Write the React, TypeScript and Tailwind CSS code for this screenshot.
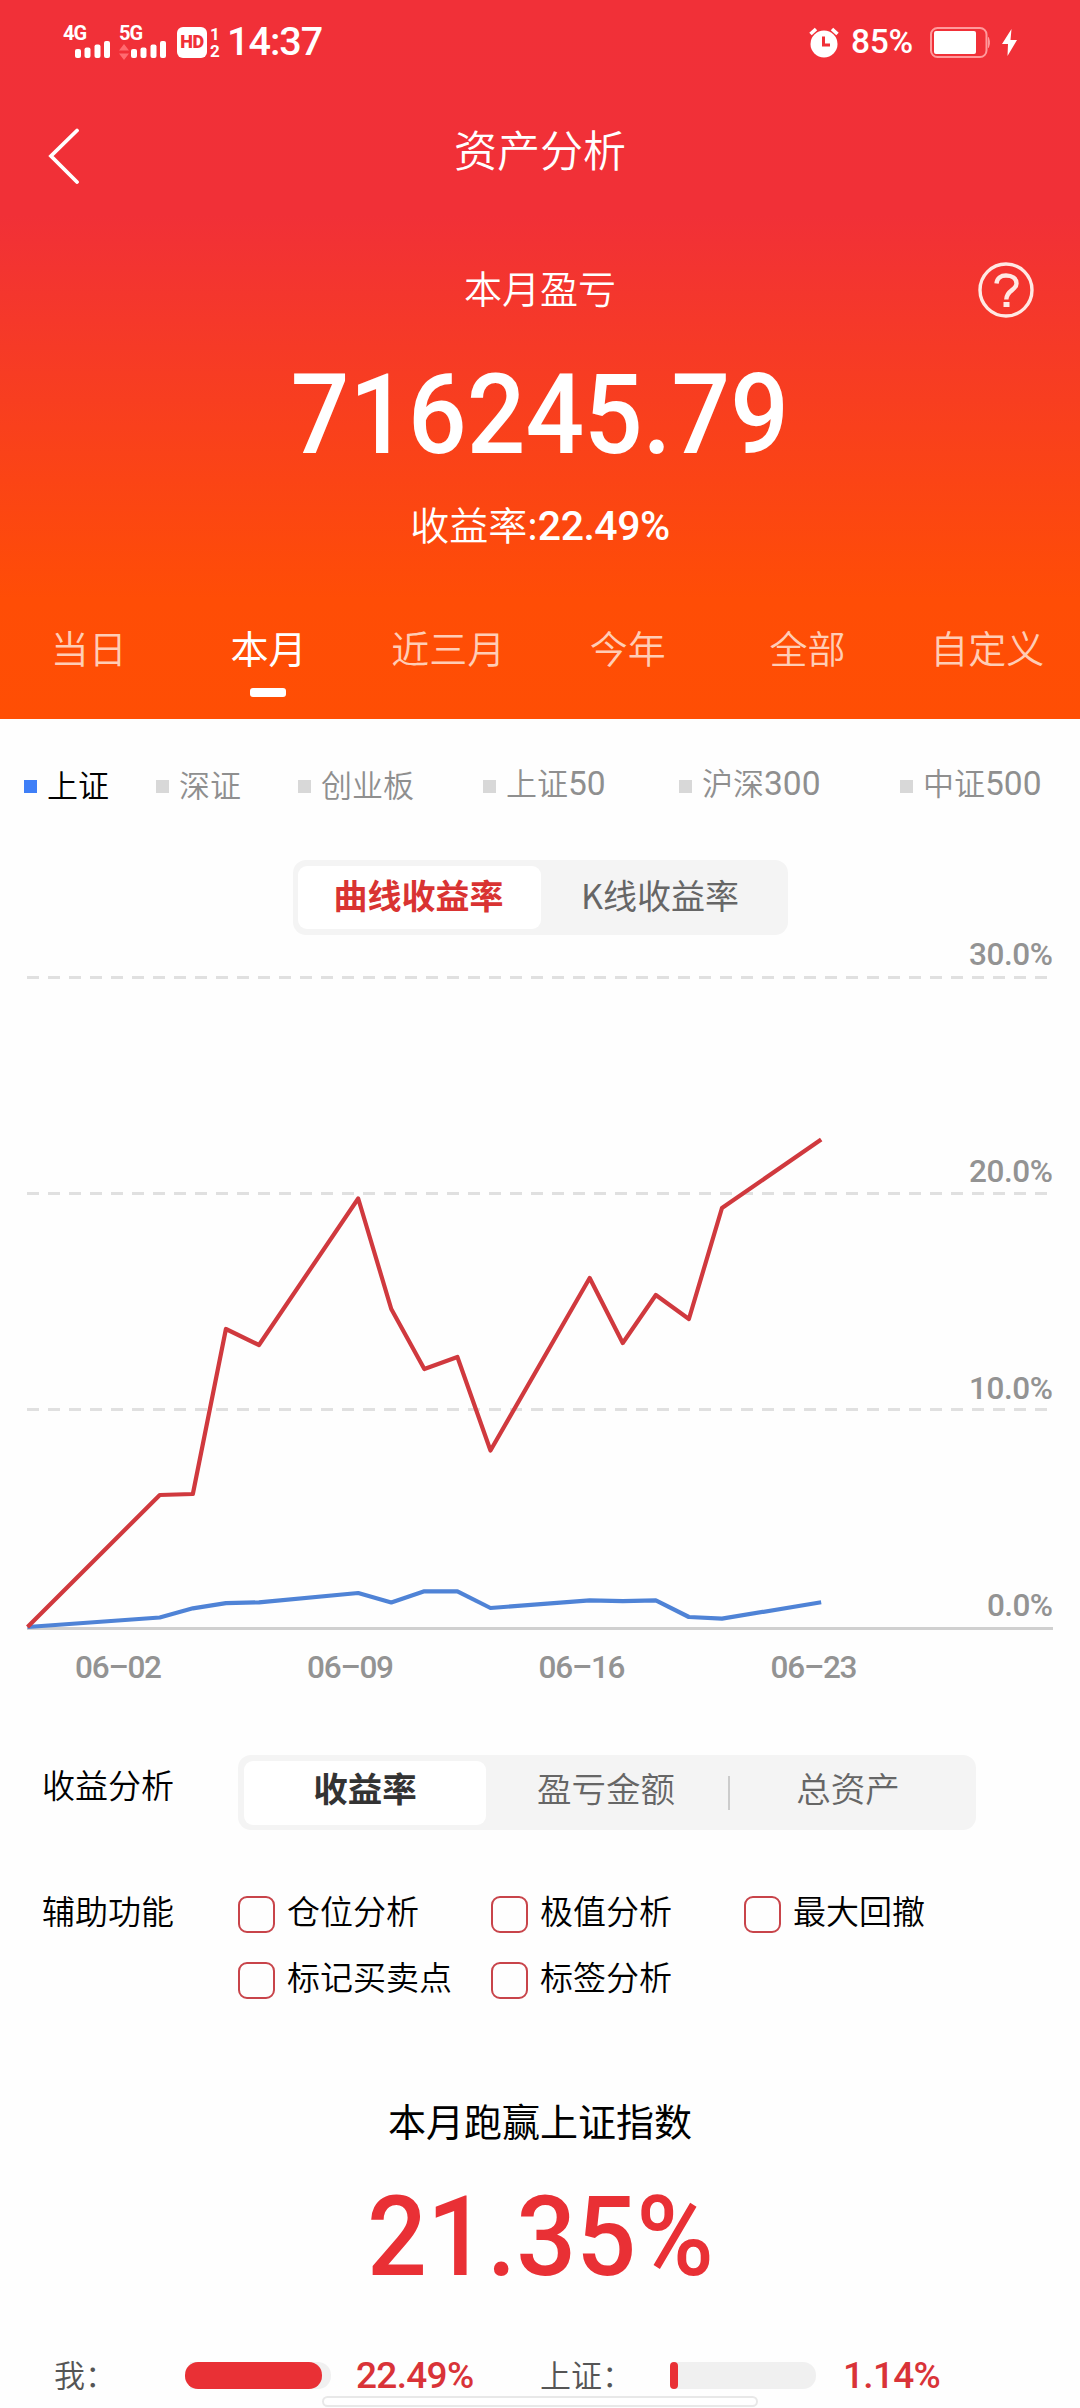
import type { ReactNode } from 'react';

const CJK = "font-['Noto_Sans_CJK_SC',sans-serif]";
const NUM = "font-['Roboto','Noto_Sans_CJK_SC',sans-serif]";

const STEP = 33.07;
const X0 = 27.5;

const tabs = ['当日', '本月', '近三月', '今年', '全部', '自定义'];

const legend = [
  { label: '上证', digits: '', width: 'w-[132px]', active: true },
  { label: '深证', digits: '', width: 'w-[142px]' },
  { label: '创业板', digits: '', width: 'w-[185px]' },
  { label: '上证', digits: '50', width: 'w-[196px]' },
  { label: '沪深', digits: '300', width: 'w-[221px]' },
  { label: '中证', digits: '500', width: 'w-[150px]' },
];

const mine: [number, number][] = [
  [0, 1627], [4, 1495], [5, 1494], [6, 1329], [7, 1345], [10, 1198.5], [11, 1309], [12, 1369],
  [13, 1357], [14, 1450.5], [17, 1278], [18, 1343], [19, 1295], [20, 1319], [21, 1208], [24, 1139.5],
];
const index: [number, number][] = [
  [0, 1627], [4, 1617.5], [5, 1608.3], [6, 1603.2], [7, 1602.4], [10, 1593], [11, 1602.4], [12, 1591.3],
  [13, 1591.3], [14, 1608], [17, 1600.4], [18, 1601.2], [19, 1600.4], [20, 1617], [21, 1618.6], [24, 1602.3],
];
const toPoints = (s: [number, number][]) => s.map(([n, y]) => `${X0 + n * STEP},${y}`).join(' ');

function SignalBars() {
  return (
    <svg width="36" height="17" viewBox="0 0 36 17" fill="#fff">
      <rect x="0" y="8" width="6" height="9" rx="2" />
      <rect x="9.5" y="6.5" width="6" height="10.5" rx="2" />
      <rect x="19.5" y="3.5" width="6" height="13.5" rx="2" />
      <rect x="29" y="0" width="6" height="17" rx="2" />
    </svg>
  );
}

function StatusBar() {
  return (
    <div className={`flex h-[84px] items-center justify-between pl-[63px] pr-[62px] ${NUM}`}>
      <div className="flex items-center">
        <div className="flex h-8 w-[48px] flex-col">
          <span className="text-[20px] font-bold leading-[15px] tracking-[-1px]">4G</span>
          <div className="ml-3 flex"><SignalBars /></div>
        </div>
        <div className="ml-2 flex h-8 w-[49px] flex-col">
          <span className="text-[20px] font-bold leading-[15px] tracking-[-1px]">5G</span>
          <div className="flex">
            <svg className="mr-0.5 mt-[3px]" width="10" height="16" viewBox="0 0 10 16" fill="#ff6b70">
              <path d="M5 0L10 6.5H0ZM5 16L0 9.5H10Z" />
            </svg>
            <SignalBars />
          </div>
        </div>
        <div className="ml-[9px] flex h-[31px] w-[30px] items-center justify-center rounded-[6px] bg-white text-[18px] font-black leading-none tracking-[-0.5px] text-[#f03037]">
          HD
        </div>
        <div className="ml-[3px] flex h-[31px] w-[10px] flex-col items-center justify-between text-[17px] font-bold leading-[14px]">
          <span>1</span>
          <span>2</span>
        </div>
        <span className="ml-[7px] inline-block text-[39.5px] font-medium leading-none tracking-[-1px]">14:37</span>
      </div>
      <div className="flex items-center">
        <svg width="30" height="31" viewBox="0 0 30 31">
          <circle cx="15" cy="17" r="13.5" fill="#fff" />
          <path d="M1.500 7L7 2M28.500 7L23 2" stroke="#fff" strokeWidth="3.6" />
          <path d="M14.500 9.500V18H21" fill="none" stroke="#f03037" strokeWidth="3" />
        </svg>
        <span className="ml-[12px] w-[79px] text-[33.5px] font-medium leading-none tracking-[-0.3px]">85%</span>
        <svg width="61" height="31" viewBox="0 0 61 31">
          <rect x="1" y="1" width="55.500" height="29" rx="6.500" fill="none" stroke="#ff9a9c" strokeWidth="2" />
          <rect x="4" y="4" width="42" height="23" rx="2" fill="#fff" />
          <path d="M58.500 10.500Q60.500 15.500 58.500 20.500Z" fill="#ff9a9c" stroke="#ff9a9c" />
        </svg>
        <svg className="ml-[11px] mr-px" width="15" height="27" viewBox="0 0 15 27" fill="#fff">
          <path d="M9.500 0L0 15H6L5.500 27L15 11H8.500Z" />
        </svg>
      </div>
    </div>
  );
}

function Header() {
  return (
    <header className="flex h-[719px] flex-col bg-[linear-gradient(180deg,#f13038_0px,#f13037_215px,#f5382a_320px,#fb4415_480px,#ff4d06_600px,#ff4e04_719px)] text-white">
      <StatusBar />
      <div className="grid h-[128px] grid-cols-[200px_1fr_200px] items-center">
        <svg className="ml-[48px] mt-[16px]" width="32" height="56" viewBox="0 0 32 56" fill="none" stroke="#fff" strokeWidth="3.8" strokeLinecap="round">
          <path d="M29 2.500L3 28L29 54" />
        </svg>
        <h1 className="text-center text-[43px] font-[350] leading-none">资产分析</h1>
      </div>
      <div className="grid h-[148px] grid-cols-[200px_1fr_200px] items-center">
        <div className="col-start-2 mt-px text-center text-[38px] font-[350] leading-none">本月盈亏</div>
        <svg className="ml-[98px] mt-[8px]" width="56" height="56" viewBox="0 0 56 56">
          <circle cx="28" cy="28" r="26" fill="none" stroke="#ffe9e4" strokeWidth="3.4" />
          <path d="M18.500 21.500C19 16 23 13.500 28 13.500C34 13.500 38.500 16.500 38.500 21.500C38.500 28.500 28.300 28 28.300 37.500" fill="none" stroke="#ffe9e4" strokeWidth="4.4" />
          <rect x="25.500" y="40" width="6" height="5" fill="#ffe9e4" />
        </svg>
      </div>
      <div className={`flex h-[107px] items-center justify-center ${NUM}`}>
        <span className="mt-[4px] inline-block scale-x-[0.93] text-[111px] font-medium leading-none">716245.79</span>
      </div>
      <div className="flex h-[115px] items-center justify-center">
        <span className="-mt-[2px] text-[39px] font-[350] leading-none">收益率:</span>
        <span className={`mt-[4px] text-[41px] font-medium leading-none tracking-[-0.5px] ${NUM}`}>22.49%</span>
      </div>
      <nav className="-ml-px grid w-[1078px] grid-cols-6 pt-[35px]">
        {tabs.map((t) => (
          <div key={t} className="flex flex-col items-center">
            <span className={`text-[38px] leading-[60px] ${t === '本月' ? 'font-normal text-white' : 'font-[350] text-[#ffcdb6]'}`}>{t}</span>
            {t === '本月' && <span className="mt-[11px] h-[9px] w-[36px] rounded-[3px] bg-white" />}
          </div>
        ))}
      </nav>
    </header>
  );
}

function Legend() {
  return (
    <div className="flex h-[135px] items-center pl-[24px]">
      {legend.map((l) => (
        <div key={l.label + l.digits} className={`flex shrink-0 items-center ${l.width}`}>
          <span className={`size-[13px] ${l.active ? 'bg-[#3f7ff7]' : 'bg-[#d8d8d8]'}`} />
          <span className={`ml-[10px] -mt-[6px] whitespace-nowrap text-[31px] font-[350] leading-none ${l.active ? 'text-black' : 'text-[#8f8f8f]'}`}>
            {l.label}
            {l.digits && <span className={`text-[33.5px] font-normal leading-none ${NUM}`}>{l.digits}</span>}
          </span>
        </div>
      ))}
    </div>
  );
}

function Chart() {
  return (
    <svg className={`block ${NUM}`} width="1080" height="765" viewBox="0 935 1080 765">
      <g stroke="#e0e0e0" strokeWidth="3" strokeDasharray="12 9">
        <path d="M27 977.500H1053" />
        <path d="M27 1193.500H1053" />
        <path d="M27 1409.500H1053" />
      </g>
      <path d="M27 1628.500H1053" stroke="#d0d0d0" strokeWidth="3" />
      <polyline points={toPoints(index)} fill="none" stroke="#4f83d6" strokeWidth="4.2" strokeLinejoin="round" />
      <polyline points={toPoints(mine)} fill="none" stroke="#d0393e" strokeWidth="4.2" strokeLinejoin="round" />
      <g fill="#939393" fontSize="31.5" fontWeight="500" textAnchor="end">
        <text x="1053" y="965" textLength="84">30.0%</text>
        <text x="1053" y="1182" textLength="84">20.0%</text>
        <text x="1053" y="1399" textLength="84">10.0%</text>
        <text x="1053" y="1616" textLength="66">0.0%</text>
      </g>
      <g fill="#939393" fontSize="31.5" fontWeight="500" textAnchor="middle">
        <text x="118.500" y="1678" textLength="87">06–02</text>
        <text x="350.500" y="1678" textLength="87">06–09</text>
        <text x="582" y="1678" textLength="87">06–16</text>
        <text x="814" y="1678" textLength="87">06–23</text>
      </g>
    </svg>
  );
}

function Check({ children }: { children: ReactNode }) {
  return (
    <label className="flex h-[37px] items-center">
      <span className="size-[37px] shrink-0 rounded-[9px] border-2 border-[#c8444a]" />
      <span className="-mt-[8px] ml-[12px] whitespace-nowrap text-[33px] font-[350] leading-none text-black">{children}</span>
    </label>
  );
}

function Meter({ percent }: { percent: number }) {
  return (
    <div className="h-[27px] w-[146px] rounded-l-[5px] rounded-r-[13px] bg-[linear-gradient(90deg,transparent_5px,#f0f0f0_5px)]">
      <div className="h-full rounded-[13px] bg-[#e93035]" style={{ width: `${percent}%` }} />
    </div>
  );
}

export default function App() {
  return (
    <main className={`flex h-[2408px] w-[1080px] flex-col overflow-hidden bg-[#fefefe] ${CJK}`}>
      <Header />
      <Legend />
      <div className="ml-[293px] mt-[6px] flex h-[75px] w-[495px] shrink-0 rounded-[13px] bg-[#f4f4f4] px-[5px] py-[6px]">
        <div className="flex w-[243px] items-center justify-center rounded-[9px] bg-white pb-[5px] pr-[2px] text-[34px] font-bold leading-none text-[#d93332]">曲线收益率</div>
        <div className="flex flex-1 items-center justify-center pb-[5px] pr-[4px] text-[34px] leading-none text-[#666]">K线收益率</div>
      </div>
      <Chart />

      <section className="mt-[55px] grid grid-cols-[196px_738px] pl-[42px]">
        <span className="text-[33px] font-[350] leading-[59px] text-black">收益分析</span>
        <div className="flex h-[75px] items-center rounded-[13px] bg-[#f4f4f4] px-[6px]">
          <div className="flex h-[64px] w-[242px] items-center justify-center rounded-[9px] bg-white pb-[10px] text-[34.5px] font-bold leading-none text-[#333]">收益率</div>
          <div className="flex h-[64px] w-[242px] items-center justify-center pb-[10px] pr-[2px] text-[34.5px] font-[350] leading-none text-[#666]">盈亏金额</div>
          <div className="h-[34px] w-[2px] bg-[#ccc]" />
          <div className="flex h-[64px] w-[236px] items-center justify-center pb-[10px] text-[34.5px] font-[350] leading-none text-[#666]">总资产</div>
        </div>
      </section>

      <section className="mt-[66px] grid grid-cols-[196px_800px] pl-[42px]">
        <span className="-mt-[4px] text-[33px] font-[350] leading-[37px] text-black">辅助功能</span>
        <div className="grid grid-cols-[253px_253px_253px] gap-y-[29px]">
          <Check>仓位分析</Check>
          <Check>极值分析</Check>
          <Check>最大回撤</Check>
          <Check>标记买卖点</Check>
          <Check>标签分析</Check>
        </div>
      </section>

      <h2 className="mt-[91px] text-center text-[38px] font-normal leading-[60px] text-black">本月跑赢上证指数</h2>
      <div className={`flex h-[173px] items-center justify-center ${NUM}`}>
        <span className="mt-[2px] inline-block scale-x-[0.95] text-[111px] font-medium leading-none text-[#e93035]">21.35%</span>
      </div>

      <div className="mt-[32px] grid h-[41px] grid-cols-[131px_171px_184px_130px_173px_150px] items-center pl-[54px]">
        <span className="-mt-[4px] text-[31px] font-[350] leading-none text-[#555]">我：</span>
        <Meter percent={94} />
        <span className={`text-[37px] font-medium leading-none tracking-[-0.7px] text-[#d93338] ${NUM}`}>22.49%</span>
        <span className="-mt-[4px] text-[31px] font-[350] leading-none text-[#555]">上证：</span>
        <Meter percent={5.8} />
        <span className={`text-[37px] font-medium leading-none tracking-[-0.7px] text-[#d93338] ${NUM}`}>1.14%</span>
      </div>
      <div className="mx-auto h-[11px] w-[436px] shrink-0 rounded-[6px] border-2 border-[#e8e8e8] bg-white" />
    </main>
  );
}
